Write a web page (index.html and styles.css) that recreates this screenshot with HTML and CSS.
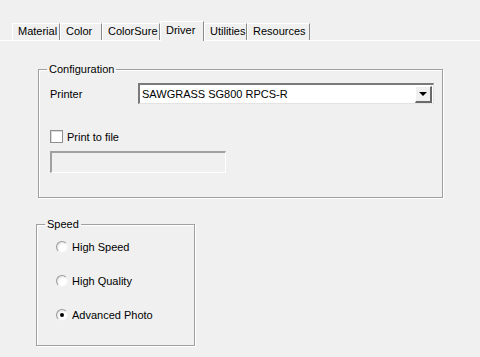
FILE: index.html
```html
<!DOCTYPE html>
<html lang="en">
<head>
    <meta charset="UTF-8">
    <title>Driver</title>
    <link rel="stylesheet" href="styles.css">
</head>
<body>
    <div class="tabs">
        <div class="tab">Material</div>
        <div class="tab">Color</div>
        <div class="tab">ColorSure</div>
        <div class="tab active">Driver</div>
        <div class="tab">Utilities</div>
        <div class="tab">Resources</div>
    </div>

    <div class="panel">
        <fieldset class="group config">
            <legend>Configuration</legend>
            <div class="group-body">
                <div class="row printer-row">
                    <span class="label">Printer</span>
                    <div class="combo">
                        <span class="combo-text">SAWGRASS SG800 RPCS-R</span>
                        <span class="combo-btn"><span class="arrow"></span></span>
                    </div>
                </div>
                <div class="row check-row">
                    <span class="check"></span>
                    <span>Print to file</span>
                </div>
                <div class="textbox"></div>
            </div>
        </fieldset>

        <fieldset class="group speed">
            <legend>Speed</legend>
            <div class="group-body">
                <div class="radio-row"><span class="radio"></span><span>High Speed</span></div>
                <div class="radio-row"><span class="radio"></span><span>High Quality</span></div>
                <div class="radio-row"><span class="radio checked"></span><span>Advanced Photo</span></div>
            </div>
        </fieldset>
    </div>
</body>
</html>
```

FILE: styles.css
```css
html, body {
    margin: 0;
    padding: 0;
    background: #f0f0f0;
}
body {
    font: 11px "Liberation Sans", Arial, sans-serif;
    color: #000;
    width: 480px;
    height: 357px;
    overflow: hidden;
}

/* tab strip */
.tabs {
    display: flex;
    align-items: flex-end;
    padding: 0 0 0 12px;
    height: 40px;
}
.tab {
    box-sizing: border-box;
    height: 17px;
    line-height: 15px;
    padding-left: 5px;
    border-left: 1px solid #fff;
    border-top: 1px solid #fff;
    border-right: 1px solid #8a8a8a;
    white-space: nowrap;
}
.tab:nth-child(1) { width: 48px; }
.tab:nth-child(2) { width: 42px; }
.tab:nth-child(3) { width: 58px; }
.tab:nth-child(5) { width: 43px; }
.tab:nth-child(6) { width: 63px; }
.tab.active {
    width: 44px;
    height: 20px;
    line-height: 17px;
    margin-bottom: -1px;
    background: #f0f0f0;
    position: relative;
    z-index: 1;
}

/* tab page */
.panel {
    box-sizing: border-box;
    border-top: 1px solid #fff;
    padding-top: 22px;
    height: 317px;
}

/* group boxes */
.group {
    box-sizing: border-box;
    margin: 0;
    padding: 0;
    border: 1px solid #a0a0a0;
    box-shadow: 1px 1px 0 #fff, inset 1px 1px 0 #fff;
}
.group legend {
    margin-left: 8px;
    padding: 0 2px;
    line-height: 13px;
}
.config {
    margin-left: 38px;
    width: 405px;
    height: 135px;
}
.config .group-body {
    padding-left: 11px;
}
.speed {
    margin: 20px 0 0 36px;
    width: 159px;
    height: 128px;
}
.speed .group-body {
    padding: 9px 0 0 19px;
}

.row {
    display: flex;
    align-items: center;
}
.printer-row {
    margin-top: 7px;
}
.label {
    width: 88px;
}
.combo {
    box-sizing: border-box;
    width: 296px;
    height: 21px;
    display: flex;
    align-items: center;
    background: #fff;
    border-top: 2px solid #7a7a7a;
    border-left: 2px solid #7a7a7a;
    border-right: 1px solid #e3e3e3;
    border-bottom: 1px solid #e3e3e3;
}
.combo-text {
    flex: 1;
    padding-left: 2px;
}
.combo-btn {
    box-sizing: border-box;
    width: 17px;
    height: 17px;
    margin-right: 1px;
    background: #f0f0f0;
    border-top: 1px solid #fff;
    border-left: 1px solid #fff;
    border-right: 2px solid #6a6a6a;
    border-bottom: 2px solid #6a6a6a;
    display: flex;
    align-items: center;
    justify-content: center;
}
.arrow {
    width: 0;
    height: 0;
    border-left: 4px solid transparent;
    border-right: 4px solid transparent;
    border-top: 4px solid #000;
    margin-top: 1px;
}

.check-row {
    margin-top: 26px;
}
.check {
    box-sizing: border-box;
    width: 13px;
    height: 13px;
    margin-right: 4px;
    background: #fff;
    border: 1px solid #8e8f8f;
    box-shadow: inset 1px 1px 0 #dcdcdc;
}
.textbox {
    box-sizing: border-box;
    width: 176px;
    height: 22px;
    margin-top: 8px;
    background: #f0f0f0;
    border-top: 2px solid #a0a0a0;
    border-left: 2px solid #a0a0a0;
    border-right: 1px solid #fff;
    border-bottom: 1px solid #fff;
}

.radio-row {
    display: flex;
    align-items: center;
    height: 14px;
    margin-bottom: 20px;
}
.radio {
    box-sizing: border-box;
    width: 12px;
    height: 12px;
    margin-right: 4px;
    border-radius: 50%;
    background: radial-gradient(circle at 65% 65%, #fff 40%, #e8e8e8 70%);
    border: 1px solid;
    border-color: #9a9a9a #f4f4f4 #f4f4f4 #9a9a9a;
    display: flex;
    align-items: center;
    justify-content: center;
}
.radio.checked::after {
    content: "";
    width: 4px;
    height: 4px;
    border-radius: 50%;
    background: #000;
}
```
